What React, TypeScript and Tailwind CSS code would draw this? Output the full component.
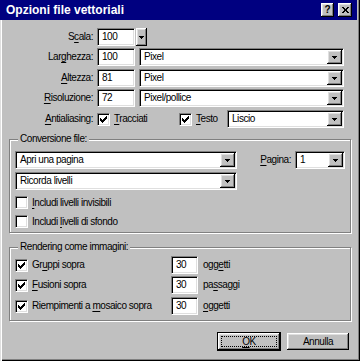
const sunken =
  'border border-t-[#808080] border-l-[#808080] border-b-white border-r-white shadow-[inset_1px_1px_0_#000,inset_-1px_-1px_0_#dfdfdf] bg-white'
const raised =
  'bg-[#c0c0c0] shadow-[inset_-1px_-1px_0_#000,inset_1px_1px_0_#fff,inset_-2px_-2px_0_#808080,inset_2px_2px_0_#dfdfdf]'
const etched = 'border border-[#808080] shadow-[inset_1px_1px_0_#fff,1px_1px_0_#fff]'

function Arrow() {
  return (
    <svg width="5" height="3" viewBox="0 0 5 3" shapeRendering="crispEdges">
      <path d="M0 0h5v1H0zM1 1h3v1H1zM2 2h1v1H2z" fill="#000" />
    </svg>
  )
}

function Select({ className, value }: { className: string; value: string }) {
  return (
    <div className={`${sunken} ${className} flex h-[18px] items-stretch p-px`}>
      <span className="flex flex-1 items-center pl-[3px]">{value}</span>
      <span className={`${raised} flex w-[15px] items-center justify-center pt-px`}>
        <Arrow />
      </span>
    </div>
  )
}

function Input({ className, value }: { className: string; value: string }) {
  return <div className={`${sunken} ${className} flex h-[18px] items-center p-px pl-[4px]`}>{value}</div>
}

function Check({ on }: { on?: boolean }) {
  return (
    <span className={`${sunken} flex h-[13px] w-[13px] shrink-0 items-center justify-center`}>
      {on && (
        <svg width="7" height="7" viewBox="0 0 7 7" shapeRendering="crispEdges">
          <path
            d="M0 2h1v3H0zM1 3h1v3H1zM2 4h1v3H2zM3 3h1v3H3zM4 2h1v3H4zM5 1h1v3H5zM6 0h1v3H6z"
            fill="#000"
          />
        </svg>
      )}
    </span>
  )
}

function U({ children }: { children: string }) {
  return <span className="underline underline-offset-[2px]">{children}</span>
}

function Label({ children }: { children: React.ReactNode }) {
  return <div className="mr-[4px] w-[93px] text-right">{children}</div>
}

export default function App() {
  return (
    <div className="flex h-[361px] w-[360px] flex-col bg-[#c0c0c0] font-['Liberation_Sans',Arial,sans-serif] text-[10px] leading-none tracking-[-0.45px] text-black shadow-[inset_1px_0_0_#dfdfdf,inset_2px_0_0_#fff,inset_-1px_-1px_0_#000,inset_-2px_-2px_0_#808080]">
      {/* title bar */}
      <div className="mr-[3px] flex h-[20px] items-center bg-[#000080] pl-[6px] pr-[5px]">
        <span className="flex-1 text-[12px] font-bold tracking-normal text-white">Opzioni file vettoriali</span>
        <span className={`${raised} flex h-[14px] w-[13px] items-center justify-center text-[10px] font-bold tracking-normal`}>
          ?
        </span>
        <span className={`${raised} ml-[4px] flex h-[14px] w-[14px] items-center justify-center`}>
          <svg width="7" height="6" viewBox="0 0 7 6" shapeRendering="crispEdges">
            <path d="M0 0h2v1H0zM5 0h2v1H5zM1 1h2v1H1zM4 1h2v1H4zM2 2h3v2H2zM1 4h2v1H1zM4 4h2v1H4zM0 5h2v1H0zM5 5h2v1H5z" fill="#000" />
          </svg>
        </span>
      </div>

      {/* size fields */}
      <div className="mt-[8px] flex h-[18px] items-center">
        <Label>
          S<U>c</U>ala:
        </Label>
        <Input className="w-[38px]" value="100" />
        <span className={`${raised} ml-[1px] flex h-[18px] w-[11px] items-center justify-center`}>
          <Arrow />
        </span>
      </div>
      <div className="mt-[2px] flex h-[18px] items-center">
        <Label>
          Lar<U>g</U>hezza:
        </Label>
        <Input className="w-[38px]" value="100" />
        <Select className="ml-[4px] w-[205px]" value="Pixel" />
      </div>
      <div className="mt-[3px] flex h-[18px] items-center">
        <Label>
          <U>A</U>ltezza:
        </Label>
        <Input className="w-[38px]" value="81" />
        <Select className="ml-[4px] w-[205px]" value="Pixel" />
      </div>
      <div className="mt-[2px] flex h-[18px] items-center">
        <Label>
          <U>R</U>isoluzione:
        </Label>
        <Input className="w-[38px]" value="72" />
        <Select className="ml-[4px] w-[205px]" value="Pixel/pollice" />
      </div>
      <div className="mt-[3px] flex h-[18px] items-center">
        <Label>
          <U>A</U>ntialiasing:
        </Label>
        <div className="flex w-[82px] items-center gap-[4px]">
          <Check on />
          <span>
            <U>T</U>racciati
          </span>
        </div>
        <div className="flex w-[48px] items-center gap-[4px]">
          <Check on />
          <span>
            <U>T</U>esto
          </span>
        </div>
        <Select className="w-[117px]" value="Liscio" />
      </div>

      {/* Conversione file */}
      <div className={`${etched} relative ml-[9px] mt-[11px] h-[94px] w-[342px] pl-[5px] pr-[5px] pt-[11px]`}>
        <span className="absolute -top-[6px] left-[8px] bg-[#c0c0c0] px-[2px]">Conversione file:</span>
        <div className="flex items-center">
          <Select className="w-[222px]" value="Apri una pagina" />
          <span className="mr-[4px] flex-1 text-right">
            <U>P</U>agina:
          </span>
          <Select className="w-[50px]" value="1" />
        </div>
        <Select className="mt-[3px] w-[222px]" value="Ricorda livelli" />
        <div className="mt-[6px] flex items-center gap-[4px]">
          <Check />
          <span>
            <U>I</U>ncludi livelli invisibili
          </span>
        </div>
        <div className="mt-[6px] flex items-center gap-[4px]">
          <Check />
          <span>
            Includi <U>l</U>ivelli di sfondo
          </span>
        </div>
      </div>

      {/* Rendering come immagini */}
      <div className={`${etched} relative ml-[9px] mt-[14px] h-[74px] w-[342px] pl-[5px] pt-[8px]`}>
        <span className="absolute -top-[6px] left-[8px] bg-[#c0c0c0] px-[2px]">Rendering come immagini:</span>
        {[
          { label: ['Gr', 'u', 'ppi sopra'], n: ['ogg', 'e', 'tti'], mt: '' },
          { label: ['', 'F', 'usioni sopra'], n: ['pa', 's', 'saggi'], mt: 'mt-[2px]' },
          { label: ['Riempimenti a ', 'm', 'osaico sopra'], n: ['', 'o', 'ggetti'], mt: 'mt-[3px]' },
        ].map((r) => (
          <div key={r.label.join('')} className={`${r.mt} flex h-[18px] items-center`}>
            <div className="flex w-[156px] items-center gap-[4px]">
              <Check on />
              <span className="whitespace-nowrap">
                {r.label[0]}
                <U>{r.label[1]}</U>
                {r.label[2]}
              </span>
            </div>
            <Input className="w-[27px]" value="30" />
            <span className="ml-[5px]">
              {r.n[0]}
              <U>{r.n[1]}</U>
              {r.n[2]}
            </span>
          </div>
        ))}
      </div>

      {/* buttons */}
      <div className="mt-[11px] flex items-center justify-end gap-[6px] pr-[11px]">
        <div className="border border-black">
          <div className={`${raised} flex h-[17px] w-[62px] items-center justify-center p-[3px]`}>
            <span className="flex h-full w-full items-center justify-center border border-dotted border-black">
              <U>O</U>K
            </span>
          </div>
        </div>
        <div className={`${raised} flex h-[17px] w-[62px] items-center justify-center`}>Annulla</div>
      </div>
    </div>
  )
}
